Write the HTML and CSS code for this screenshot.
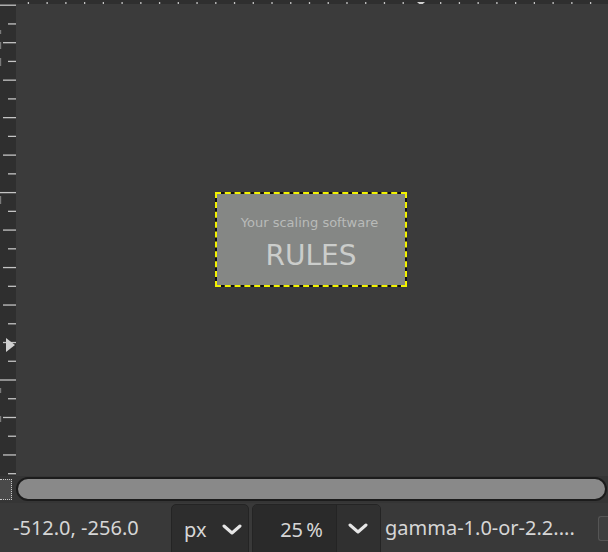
FILE: index.html
```html
<!DOCTYPE html>
<html lang="en">

<head>
    <meta charset="UTF-8">
    <title>Image Window</title>
    <link rel="stylesheet" href="styles.css">
</head>

<body>

    <div class="window">
        <!-- Regla superior -->
        <div class="ruler-top">
            <svg width="608" height="4" viewBox="0 0 608 4" id="rulerTop"></svg>
        </div>

        <div class="main">
            <!-- Regla izquierda -->
            <div class="ruler-left">
                <svg width="16" height="472" viewBox="0 0 16 472" id="rulerLeft"></svg>
            </div>

            <!-- Lienzo -->
            <div class="canvas">
                <div class="selection">
                    <div class="image">
                        <div class="image-small">Your scaling software</div>
                        <div class="image-big">RULES</div>
                    </div>
                </div>
            </div>
        </div>

        <!-- Barra de desplazamiento -->
        <div class="hscroll">
            <div class="quickmask"></div>
            <div class="trough">
                <div class="slider"></div>
            </div>
        </div>

        <!-- Barra de estado -->
        <div class="status">
            <div class="coords">-512.0, -256.0</div>
            <div class="combo unit">
                <span>px</span>
                <svg class="chevron" width="20" height="11" viewBox="0 0 20 11"><path d="M2 2 L10 9 L18 2" /></svg>
            </div>
            <div class="combo zoom">
                <div class="zoom-entry">25&#8201;%</div>
                <div class="zoom-button">
                    <svg class="chevron" width="20" height="11" viewBox="0 0 20 11"><path d="M2 2 L10 9 L18 2" /></svg>
                </div>
            </div>
            <div class="profile">gamma-1.0-or-2.2....</div>
            <div class="nav-button"></div>
        </div>
    </div>

    <script>
        const svgNs = 'http://www.w3.org/2000/svg';
        const tickStep = 18.74;

        function addLine(svg, x1, y1, x2, y2) {
            const l = document.createElementNS(svgNs, 'line');
            l.setAttribute('x1', x1);
            l.setAttribute('y1', y1);
            l.setAttribute('x2', x2);
            l.setAttribute('y2', y2);
            svg.appendChild(l);
        }

        function addShape(svg, d, cls) {
            const p = document.createElementNS(svgNs, 'path');
            p.setAttribute('d', d);
            p.setAttribute('class', cls);
            svg.appendChild(p);
        }

        // Marcas de la regla superior
        const rulerTop = document.getElementById('rulerTop');
        for (let x = 28.4; x < 608; x += tickStep) {
            addLine(rulerTop, x, 0, x, 4);
        }
        addShape(rulerTop, 'M417 0 L425 0 L421 3.5 Z', 'pointer');

        // Marcas de la regla izquierda
        const rulerLeft = document.getElementById('rulerLeft');
        for (let k = 0; k < 26; k++) {
            const y = 1.2 + k * tickStep;
            let x1 = 8;
            if (k % 10 === 0) x1 = 0;
            else if (k % 2 === 0) x1 = 3;
            addLine(rulerLeft, x1, y, 16, y);
        }

        // Numeros cortados en el borde
        [[26, 4], [38, 7], [54, 8], [192, 8], [384, 5], [412, 6]].forEach(function (n) {
            addShape(rulerLeft, 'M0 ' + n[0] + ' h1.2 v' + n[1] + ' h-1.2 Z', 'digit');
        });

        // Indicador del puntero
        addShape(rulerLeft, 'M6 334 L15 341 L6 348 Z', 'pointer');
    </script>

</body>

</html>
```

FILE: styles.css
```css
body {
    margin: 0;
    padding: 0;
    background-color: #3b3b3b;
    font-family: "Noto Sans", "DejaVu Sans", sans-serif;
    overflow: hidden;
}

.window {
    width: 608px;
    height: 552px;
    display: flex;
    flex-direction: column;
    overflow: hidden;
}

/* Reglas */
.ruler-top {
    height: 4px;
    background-color: #2f2f2f;
    line-height: 0;
}

.ruler-top line,
.ruler-left line {
    stroke: #c4c4c4;
    stroke-width: 1.3;
}

.pointer {
    fill: #d0d0d0;
}

.digit {
    fill: #7a7a7a;
}

.main {
    display: flex;
    height: 472px;
}

.ruler-left {
    width: 16px;
    background-color: #2f2f2f;
    line-height: 0;
}

/* Lienzo */
.canvas {
    flex: 1;
    background-color: #3b3b3b;
    display: flex;
    justify-content: center;
    align-items: center;
}

.selection {
    background-color: #111;
    margin-left: -2px;
    margin-top: -1px;
}

.image {
    width: 188px;
    height: 91px;
    border: 2px dashed #f2f200;
    background-color: #858785;
    background-clip: padding-box;
    display: flex;
    flex-direction: column;
    align-items: center;
    font-family: "DejaVu Sans", sans-serif;
}

.image-small {
    margin-top: 21px;
    margin-left: -3px;
    font-size: 13px;
    color: #b9bbb9;
    line-height: 16px;
}

.image-big {
    margin-top: 9px;
    font-size: 28px;
    color: #cbcdcb;
    line-height: 32px;
}

/* Barra de desplazamiento */
.hscroll {
    height: 27px;
    display: flex;
    background-color: #353535;
}

.quickmask {
    width: 11px;
    height: 19px;
    margin: 3px 4px 0 0;
    border: 1px dotted #c8c8c8;
    border-left: none;
    background-color: #4a4a4a;
}

.trough {
    flex: 1;
    padding: 1px 1px 2px 0;
}

.slider {
    height: 20px;
    border: 2px solid #1c1c1c;
    border-radius: 12px;
    background-color: #898989;
}

/* Barra de estado */
.status {
    height: 49px;
    display: flex;
    align-items: flex-start;
    background-color: #393939;
    color: #d6d6d6;
    font-size: 20px;
}

.coords {
    width: 158px;
    padding-left: 13px;
    padding-top: 11px;
}

.combo {
    margin-top: 1px;
    height: 56px;
    box-sizing: border-box;
    border: 1px solid #242424;
    border-radius: 5px;
    display: flex;
}

.unit {
    width: 78px;
    background-color: #2d2d2d;
    padding: 11px 0 0 12px;
    gap: 16px;
}

.chevron {
    display: block;
}

.chevron path {
    fill: none;
    stroke: #e6e6e6;
    stroke-width: 3;
    stroke-linecap: round;
    stroke-linejoin: round;
}

.unit .chevron {
    margin-top: 8px;
}

.zoom {
    width: 129px;
    margin-left: 3px;
    overflow: hidden;
}

.zoom-entry {
    width: 84px;
    background-color: #2a2a2a;
    border-right: 1px solid #242424;
    text-align: right;
    padding: 11px 13px 0 0;
    box-sizing: border-box;
}

.zoom-button {
    flex: 1;
    background-color: #303030;
    padding: 18px 0 0 11px;
}

.profile {
    padding-top: 11px;
    margin-left: 4px;
}

.nav-button {
    margin-left: auto;
    margin-top: 13px;
    width: 9px;
    height: 23px;
    border: 1px solid #555;
    border-right: none;
    border-radius: 3px 0 0 3px;
    background-color: #3f3f3f;
}
```
